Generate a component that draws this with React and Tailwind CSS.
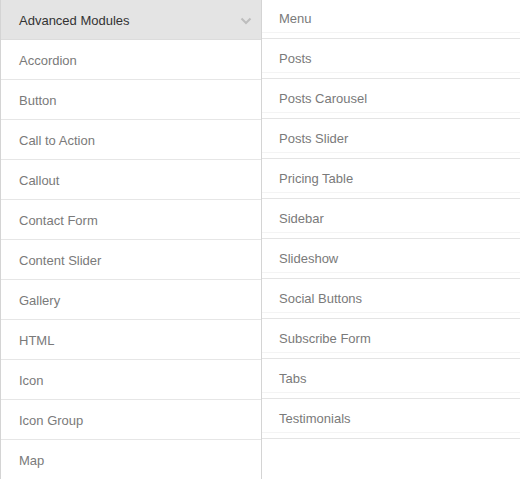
import React from 'react';

const leftItems = [
  'Accordion',
  'Button',
  'Call to Action',
  'Callout',
  'Contact Form',
  'Content Slider',
  'Gallery',
  'HTML',
  'Icon',
  'Icon Group',
  'Map',
];

const rightItems = [
  'Menu',
  'Posts',
  'Posts Carousel',
  'Posts Slider',
  'Pricing Table',
  'Sidebar',
  'Slideshow',
  'Social Buttons',
  'Subscribe Form',
  'Tabs',
  'Testimonials',
];

function Chevron() {
  return (
    <svg width="12" height="8" viewBox="0 0 12 8" fill="none">
      <path d="M1.5 1.5 L6 6 L10.5 1.5" stroke="#bdbdbd" strokeWidth="2" />
    </svg>
  );
}

function App() {
  return (
    <div
      className="flex w-[520px] h-[479px] overflow-hidden bg-white text-[13px]"
      style={{ fontFamily: '"Liberation Sans", Arial, sans-serif' }}
    >
      {/* left column */}
      <div className="w-[262px] shrink-0 border-l border-r border-[#d4d4d4] flex flex-col">
        <div className="h-10 shrink-0 flex items-center justify-between bg-[#e4e4e4] border-b border-[#dcdcdc] pl-[18px] pr-[9px] pt-[2px] text-[#333]">
          <span>Advanced Modules</span>
          <Chevron />
        </div>
        {leftItems.map((item) => (
          <div
            key={item}
            className="h-10 shrink-0 flex items-center border-b border-[#e6e6e6] pl-[18px] pt-[2px] text-[#7a7a7a]"
          >
            {item}
          </div>
        ))}
      </div>

      {/* right column */}
      <div className="flex-1 flex flex-col -mt-px">
        {rightItems.map((item) => (
          <div key={item} className="h-10 shrink-0 border-b border-[#e4e4e4] pb-1">
            <div className="h-[34px] flex items-center pt-[7px] pl-[17px] border-b border-[#f4f4f4] text-[#7a7a7a]">
              {item}
            </div>
          </div>
        ))}
      </div>
    </div>
  );
}

export default App;
